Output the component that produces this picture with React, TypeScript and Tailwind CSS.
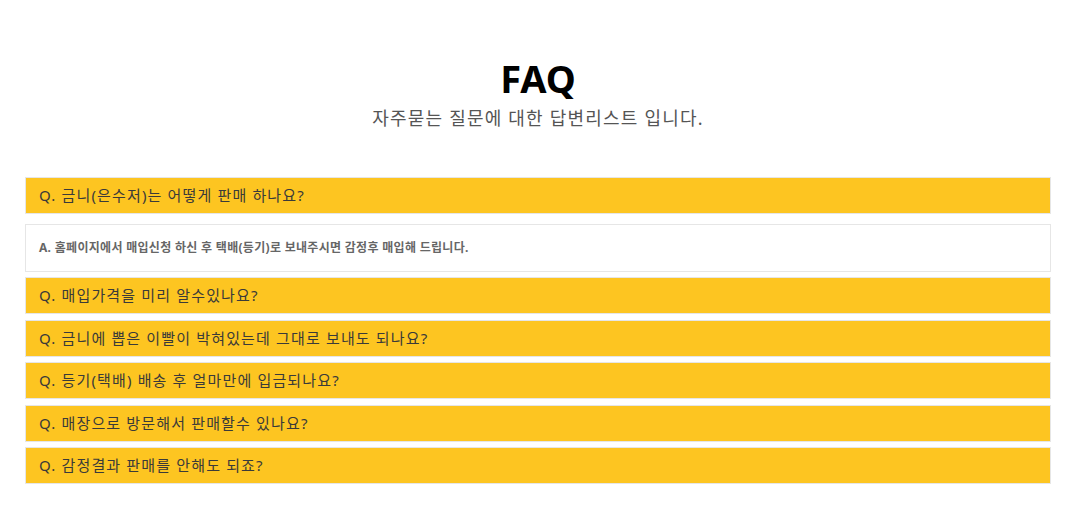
import React from "react";

const questions = [
  "Q. 매입가격을 미리 알수있나요?",
  "Q. 금니에 뽑은 이빨이 박혀있는데 그대로 보내도 되나요?",
  "Q. 등기(택배) 배송 후 얼마만에 입금되나요?",
  "Q. 매장으로 방문해서 판매할수 있나요?",
  "Q. 감정결과 판매를 안해도 되죠?",
];

const font = { fontFamily: '"Noto Sans", "Noto Sans CJK KR", sans-serif' };

function Item({ text }: { text: string }) {
  return (
    <div className="h-[37px] bg-[#fdc521] border border-[#e6e6e6] flex items-center px-[13px] text-[15px] tracking-[1.15px] text-[#3a3a3a] leading-none">
      {text}
    </div>
  );
}

export default function App() {
  return (
    <div className="bg-white w-full min-h-[529px]" style={font}>
      <div className="pt-[57px] flex flex-col items-center">
        <h1 className="text-[38px] leading-[42px] font-bold text-black">FAQ</h1>
        <p className="mt-[7px] text-[18px] leading-[24px] tracking-[1.2px] text-[#555]">자주묻는 질문에 대한 답변리스트 입니다.</p>
      </div>
      <div className="mt-[47px] px-[25px] flex flex-col">
        <Item text="Q. 금니(은수저)는 어떻게 판매 하나요?" />
        <div className="mt-[10px] mb-[5px] h-[48px] border border-[#e6e6e6] flex items-center px-[13px] text-[12px] tracking-[0.3px] font-bold text-[#666]">
          A. 홈페이지에서 매입신청 하신 후 택배(등기)로 보내주시면 감정후 매입해 드립니다.
        </div>
        <div className="flex flex-col gap-[5.5px]">
          {questions.map((q) => (
            <Item key={q} text={q} />
          ))}
        </div>
      </div>
    </div>
  );
}
